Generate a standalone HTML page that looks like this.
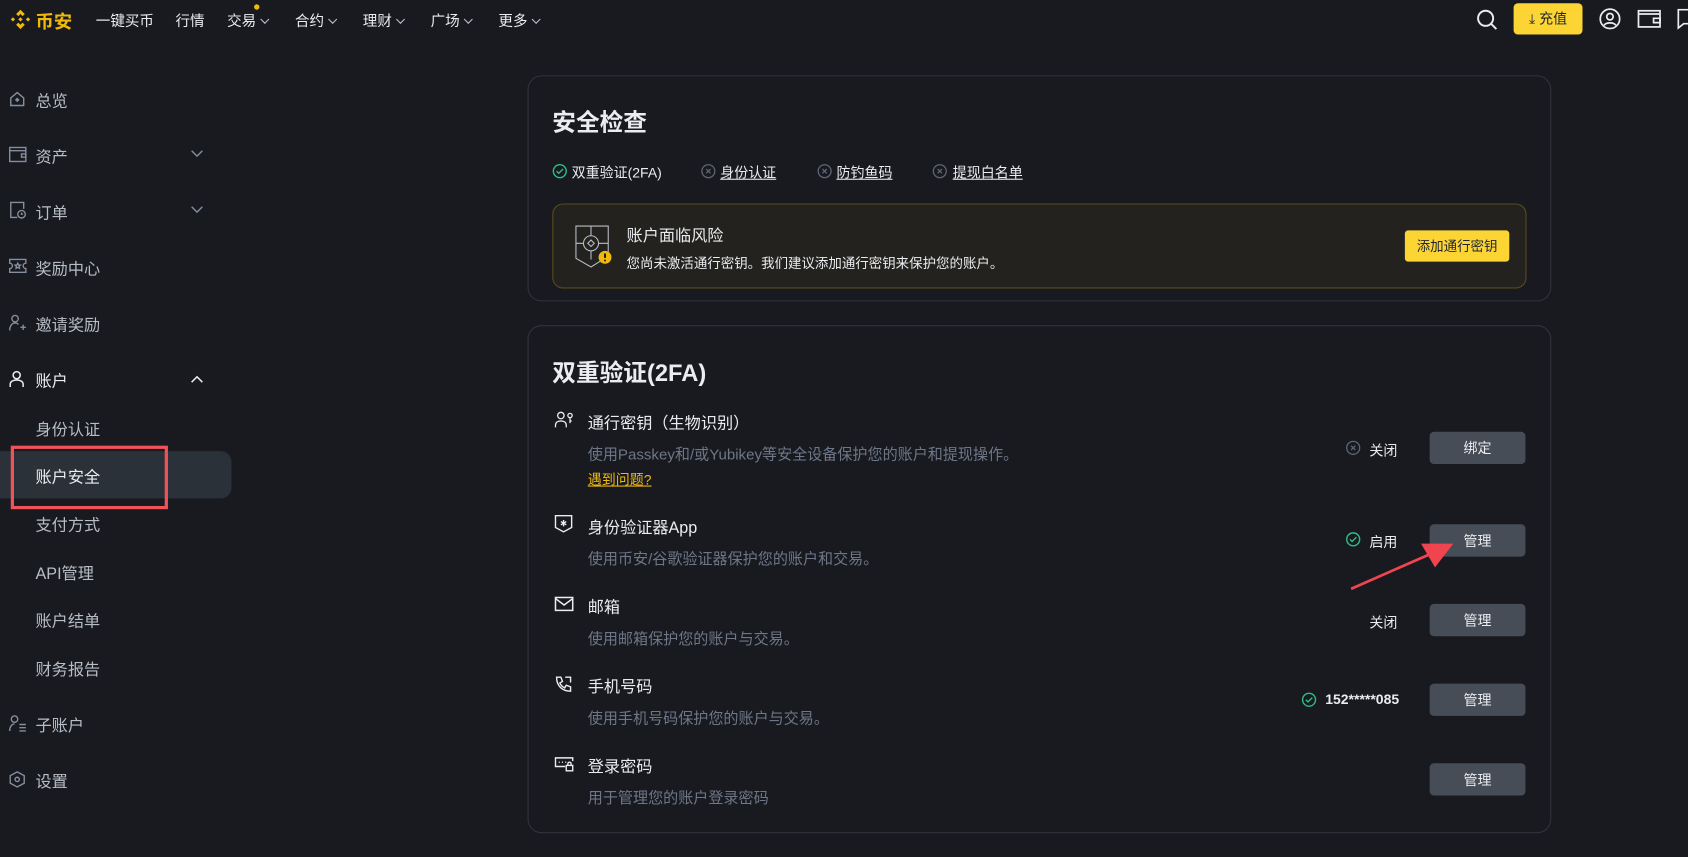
<!DOCTYPE html>
<html><head><meta charset="utf-8"><style>
html,body{margin:0;padding:0;background:#181a20;overflow:hidden;width:1688px;height:857px}
#w{position:absolute;left:0;top:0;width:1568px;height:796px;transform:scale(1.07653);transform-origin:0 0;font-family:"Liberation Sans","Noto Sans CJK SC",sans-serif;color:#eaecef}
.a{position:absolute;white-space:nowrap}
.nav{font-size:13.5px;color:#eaecef;top:8px}
.chev{display:inline-block;width:5px;height:5px;border-right:1.3px solid #b7bdc6;border-bottom:1.3px solid #b7bdc6;transform:rotate(45deg);margin-left:5px;position:relative;top:-3px}
.sb{font-size:15px;color:#b7bdc6;left:33px}
.si{position:absolute;left:8px}
.card{position:absolute;left:490px;width:949px;border:1px solid #2f343c;border-radius:13px}
.btn{position:absolute;left:1328px;width:89px;height:30px;background:#474d57;border-radius:4px;color:#eaecef;font-size:13px;text-align:center;line-height:32px}
.t{font-size:15px;color:#eaecef;left:546px}
.d{font-size:14px;color:#6e7787;left:546px}
.st{font-size:13px;color:#eaecef}
</style></head><body><div id="w">
<svg class="a" style="left:8px;top:7px" width="22" height="22" viewBox="0 0 22 22" fill="#f0b90b"><path d="M11 2l4 4-2 2-2-2-2 2-2-2zM2 11l2-2 2 2-2 2zM16 11l2-2 2 2-2 2zM11 20l-4-4 2-2 2 2 2-2 2 2zM11 9l2 2-2 2-2-2z"/></svg>
<div class="a" style="left:33px;top:6px;font-size:17px;font-weight:bold;color:#f0b90b">币安</div>
<div class="a nav" style="left:89px">一键买币</div>
<div class="a nav" style="left:163px">行情</div>
<div class="a nav" style="left:211px">交易<span class="chev"></span></div>
<div class="a" style="left:236px;top:4px;width:5px;height:5px;border-radius:50%;background:#f0b90b"></div>
<div class="a nav" style="left:274px">合约<span class="chev"></span></div>
<div class="a nav" style="left:337px">理财<span class="chev"></span></div>
<div class="a nav" style="left:400px">广场<span class="chev"></span></div>
<div class="a nav" style="left:463px">更多<span class="chev"></span></div>
<svg class="a" style="left:1370px;top:7px" width="22" height="22" viewBox="0 0 22 22" fill="none" stroke="#eaecef" stroke-width="1.8"><circle cx="10" cy="10" r="7"/><path d="M15 15l5 5"/></svg>
<div class="a" style="left:1406px;top:3px;width:64px;height:29px;background:#fcd535;border-radius:4px;color:#202630;font-size:13px;line-height:29px;text-align:center">⤓ 充值</div>
<svg class="a" style="left:1485px;top:7px" width="21" height="21" viewBox="0 0 21 21" fill="none" stroke="#eaecef" stroke-width="1.6"><circle cx="10.5" cy="10.5" r="9"/><circle cx="10.5" cy="8.5" r="3"/><path d="M5 16.5c2-3 9-3 11 0"/></svg>
<svg class="a" style="left:1521px;top:8px" width="22" height="19" viewBox="0 0 22 19" fill="none" stroke="#eaecef" stroke-width="1.6"><rect x="1" y="2" width="20" height="15"/><path d="M1 5h20M15 9h6v4h-6z"/></svg>
<svg class="a" style="left:1558px;top:8px" width="12" height="20" viewBox="0 0 12 20" fill="none" stroke="#eaecef" stroke-width="1.6"><path d="M1 1h11v13h-6l-5 4z"/></svg>
<svg class="si" style="top:84px" width="16" height="16" viewBox="0 0 16 16" fill="none" stroke="#848e9c" stroke-width="1.3"><path d="M2 7l6-5 6 5v7H2z"/><path d="M8 7.5l1.3 1.3L8 10 6.7 8.8z" fill="#848e9c"/></svg>
<div class="a sb" style="top:83px">总览</div>
<svg class="si" style="top:136px" width="17" height="15" viewBox="0 0 17 15" fill="none" stroke="#848e9c" stroke-width="1.3"><rect x="1" y="1" width="15" height="13"/><path d="M1 4h15M12 7h4v3h-4z"/></svg>
<div class="a sb" style="top:135px">资产</div>
<svg class="a" style="left:177px;top:139px" width="12" height="8" viewBox="0 0 12 8" fill="none" stroke="#848e9c" stroke-width="1.3"><path d="M1 1l5 5 5-5"/></svg>
<svg class="si" style="top:187px" width="17" height="17" viewBox="0 0 17 17" fill="none" stroke="#848e9c" stroke-width="1.3"><path d="M8 15H2V1h12v6"/><circle cx="12" cy="12" r="3.5"/><path d="M12 10.5V12h1.3"/></svg>
<div class="a sb" style="top:187px">订单</div>
<svg class="a" style="left:177px;top:191px" width="12" height="8" viewBox="0 0 12 8" fill="none" stroke="#848e9c" stroke-width="1.3"><path d="M1 1l5 5 5-5"/></svg>
<svg class="si" style="top:240px" width="17" height="14" viewBox="0 0 17 14" fill="none" stroke="#848e9c" stroke-width="1.3"><path d="M1 1h15v3.5a2.5 2.5 0 000 5V13H1V9.5a2.5 2.5 0 000-5z"/><path d="M8.5 4.5l.8 1.6 1.7.2-1.2 1.2.3 1.7-1.6-.8-1.6.8.3-1.7L6 6.3l1.7-.2z"/></svg>
<div class="a sb" style="top:239px">奖励中心</div>
<svg class="si" style="top:292px" width="17" height="16" viewBox="0 0 17 16" fill="none" stroke="#848e9c" stroke-width="1.3"><circle cx="6" cy="4" r="3"/><path d="M1 15c0-4 2-7 5-7 1.5 0 2.5.5 3 1.5M11 12h5M13.5 9.5v5"/></svg>
<div class="a sb" style="top:291px">邀请奖励</div>
<svg class="si" style="top:344px" width="15" height="16" viewBox="0 0 15 16" fill="none" stroke="#eaecef" stroke-width="1.4"><circle cx="7.5" cy="4.5" r="3.3"/><path d="M1.5 15.5v-2.5c0-2.5 2.5-4 6-4s6 1.5 6 4v2.5"/></svg>
<div class="a sb" style="top:343px;color:#eaecef">账户</div>
<svg class="a" style="left:177px;top:348px" width="12" height="8" viewBox="0 0 12 8" fill="none" stroke="#eaecef" stroke-width="1.4"><path d="M1 7l5-5 5 5"/></svg>
<div class="a sb" style="top:388px">身份认证</div>
<div class="a" style="left:0;top:419px;width:215px;height:44px;background:#2b3139;border-radius:0 10px 10px 0"></div>
<div class="a sb" style="top:432px;color:#eaecef">账户安全</div>
<div class="a" style="left:10px;top:414px;width:140px;height:53px;border:3px solid #f0525a"></div>
<div class="a sb" style="top:477px">支付方式</div>
<div class="a sb" style="top:522px">API管理</div>
<div class="a sb" style="top:566px">账户结单</div>
<div class="a sb" style="top:611px">财务报告</div>
<svg class="si" style="top:664px" width="17" height="16" viewBox="0 0 17 16" fill="none" stroke="#848e9c" stroke-width="1.3"><circle cx="5.5" cy="4" r="3"/><path d="M1 15c0-4 2-6.5 4.5-6.5M10 9h6M10 12h6M10 15h6"/></svg>
<div class="a sb" style="top:663px">子账户</div>
<svg class="si" style="top:716px" width="16" height="16" viewBox="0 0 16 16" fill="none" stroke="#848e9c" stroke-width="1.3"><path d="M8 1l6.5 3.5v7L8 15l-6.5-3.5v-7z"/><circle cx="8" cy="8" r="2"/></svg>
<div class="a sb" style="top:715px">设置</div>
<div class="card" style="top:70px;height:208px"></div>
<div class="a" style="left:513px;top:96px;font-size:22px;font-weight:bold">安全检查</div>
<svg class="a" style="left:513px;top:152px" width="14" height="14" viewBox="0 0 14 14" fill="none" stroke="#2ebd85" stroke-width="1.3"><circle cx="7" cy="7" r="6"/><path d="M4 7l2 2 4-4"/></svg>
<div class="a" style="left:531px;top:150px;font-size:13px">双重验证(2FA)</div>
<svg class="a" style="left:651px;top:152px" width="14" height="14" viewBox="0 0 14 14" fill="none" stroke="#5e6673" stroke-width="1.2"><circle cx="7" cy="7" r="6"/><path d="M5 5l4 4M9 5l-4 4"/></svg>
<div class="a" style="left:669px;top:150px;font-size:13px;text-decoration:underline">身份认证</div>
<svg class="a" style="left:759px;top:152px" width="14" height="14" viewBox="0 0 14 14" fill="none" stroke="#5e6673" stroke-width="1.2"><circle cx="7" cy="7" r="6"/><path d="M5 5l4 4M9 5l-4 4"/></svg>
<div class="a" style="left:777px;top:150px;font-size:13px;text-decoration:underline">防钓鱼码</div>
<svg class="a" style="left:866px;top:152px" width="14" height="14" viewBox="0 0 14 14" fill="none" stroke="#5e6673" stroke-width="1.2"><circle cx="7" cy="7" r="6"/><path d="M5 5l4 4M9 5l-4 4"/></svg>
<div class="a" style="left:885px;top:150px;font-size:13px;text-decoration:underline">提现白名单</div>
<div class="a" style="left:513px;top:189px;width:903px;height:77px;background:#23221f;border:1px solid #5a4a1c;border-radius:10px"></div>
<svg class="a" style="left:532px;top:206px" width="40" height="44" viewBox="0 0 40 44" fill="none" stroke="#b7bdc6" stroke-width="1"><path d="M3 4h30v24l-8 9-8 5-14-8z"/><circle cx="17" cy="20" r="7"/><path d="M17 17l3 3-3 3-3-3zM17 4v9M17 27v8M3 20h7M24 20h9"/><circle cx="30" cy="33" r="6" fill="#f0b90b" stroke="none"/><path d="M30 29.5v4" stroke="#181a20" stroke-width="1.8"/><circle cx="30" cy="36" r="0.9" fill="#181a20" stroke="none"/></svg>
<div class="a" style="left:582px;top:208px;font-size:15px">账户面临风险</div>
<div class="a" style="left:582px;top:234px;font-size:12.5px">您尚未激活通行密钥。我们建议添加通行密钥来保护您的账户。</div>
<div class="a" style="left:1305px;top:214px;width:97px;height:29px;background:#fcd535;border-radius:3px;color:#202630;font-size:12.5px;line-height:31px;text-align:center">添加通行密钥</div>
<div class="card" style="top:302px;height:470px"></div>
<div class="a" style="left:513px;top:329px;font-size:22px;font-weight:bold">双重验证(2FA)</div>
<svg class="a" style="left:515px;top:382px" width="18" height="16" viewBox="0 0 18 16" fill="none" stroke="#eaecef" stroke-width="1.2"><circle cx="6" cy="4" r="3"/><path d="M1 15v-2c0-2.5 2-4 5-4s5 1.5 5 4v2"/><circle cx="14.5" cy="4" r="2"/><path d="M14.5 6v5M14.5 9h1.5"/></svg>
<div class="a t" style="top:382px">通行密钥（生物识别）</div>
<div class="a d" style="top:412px">使用Passkey和/或Yubikey等安全设备保护您的账户和提现操作。</div>
<div class="a" style="left:546px;top:435px;font-size:13px;color:#f0b90b;text-decoration:underline">遇到问题?</div>
<svg class="a" style="left:1250px;top:409px" width="14" height="14" viewBox="0 0 14 14" fill="none" stroke="#5e6673" stroke-width="1.2"><circle cx="7" cy="7" r="6"/><path d="M5 5l4 4M9 5l-4 4"/></svg>
<div class="a st" style="left:1272px;top:408px">关闭</div>
<div class="btn" style="top:401px">绑定</div>
<svg class="a" style="left:515px;top:478px" width="17" height="17" viewBox="0 0 17 17" fill="none" stroke="#eaecef" stroke-width="1.3"><path d="M1 1h15v11l-7.5 4L1 12z"/><path d="M8.5 5v6M6 6.5l5 3M11 6.5l-5 3"/></svg>
<div class="a t" style="top:479px">身份验证器App</div>
<div class="a d" style="top:509px">使用币安/谷歌验证器保护您的账户和交易。</div>
<svg class="a" style="left:1250px;top:494px" width="14" height="14" viewBox="0 0 14 14" fill="none" stroke="#2ebd85" stroke-width="1.3"><circle cx="7" cy="7" r="6"/><path d="M4 7l2 2 4-4"/></svg>
<div class="a st" style="left:1272px;top:493px">启用</div>
<div class="btn" style="top:487px">管理</div>
<svg class="a" style="left:515px;top:554px" width="18" height="14" viewBox="0 0 18 14" fill="none" stroke="#eaecef" stroke-width="1.4"><rect x="1" y="1" width="16" height="12"/><path d="M1 2l8 6 8-6"/></svg>
<div class="a t" style="top:553px">邮箱</div>
<div class="a d" style="top:583px">使用邮箱保护您的账户与交易。</div>
<div class="a st" style="left:1272px;top:568px">关闭</div>
<div class="btn" style="top:561px">管理</div>
<svg class="a" style="left:515px;top:627px" width="17" height="17" viewBox="0 0 17 17" fill="none" stroke="#eaecef" stroke-width="1.3"><path d="M2 2h4l1.5 4L5 7.5c1 2 2.5 3.5 4.5 4.5L11 9.5l4 1.5v4c-8 0-13-5-13-13z"/><path d="M10 2h5v5"/></svg>
<div class="a t" style="top:627px">手机号码</div>
<div class="a d" style="top:657px">使用手机号码保护您的账户与交易。</div>
<svg class="a" style="left:1209px;top:643px" width="14" height="14" viewBox="0 0 14 14" fill="none" stroke="#2ebd85" stroke-width="1.3"><circle cx="7" cy="7" r="6"/><path d="M4 7l2 2 4-4"/></svg>
<div class="a st" style="left:1231px;top:642px;font-weight:bold">152*****085</div>
<div class="btn" style="top:635px">管理</div>
<svg class="a" style="left:515px;top:703px" width="18" height="14" viewBox="0 0 18 14" fill="none" stroke="#eaecef" stroke-width="1.3"><path d="M10 9H1V1h16v3"/><path d="M4 5h1M7 5h1M10 5h1"/><rect x="11" y="8" width="6" height="5"/><path d="M12.5 8V6.5a1.5 1.5 0 013 0V8"/></svg>
<div class="a t" style="top:701px">登录密码</div>
<div class="a d" style="top:731px">用于管理您的账户登录密码</div>
<div class="btn" style="top:709px">管理</div>
<svg class="a" style="left:1250px;top:495px" width="110" height="60" viewBox="0 0 110 60"><path d="M5 52L80 19" stroke="#f0454f" stroke-width="2.5"/><path d="M100 10L70 10L83 32z" fill="#f0454f"/></svg>
</div></body></html>
